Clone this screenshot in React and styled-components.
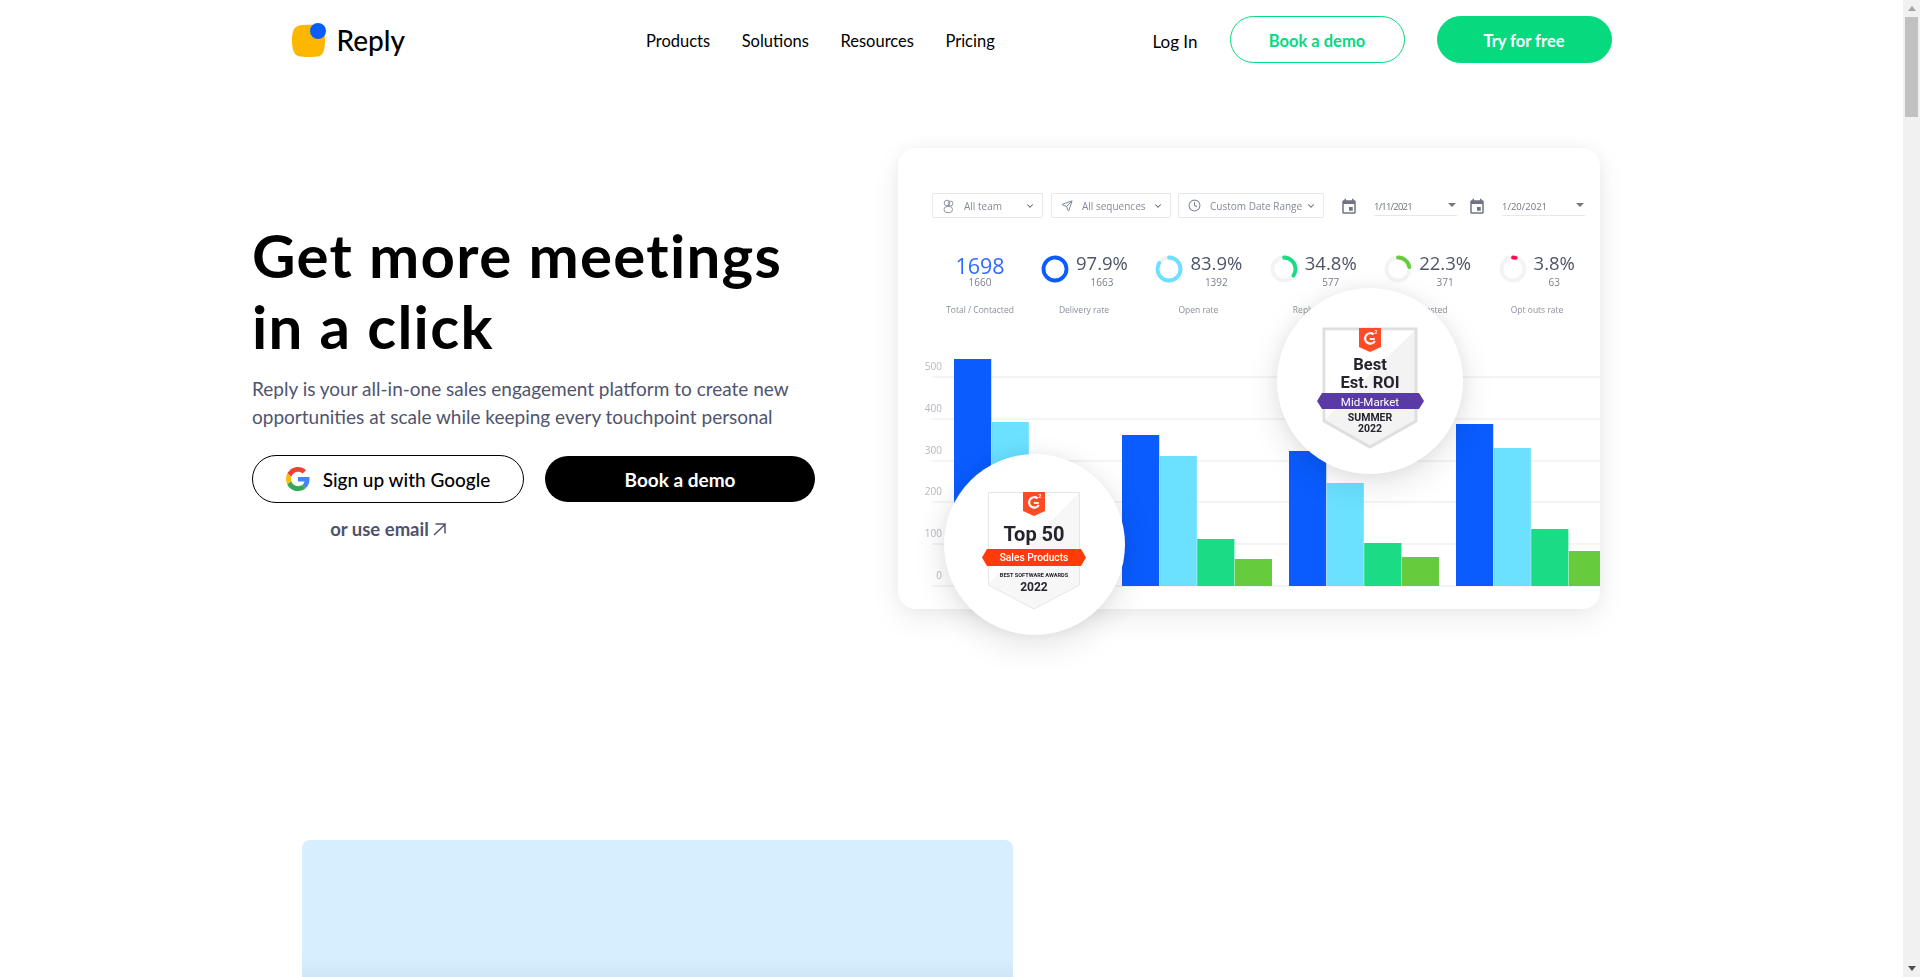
import React from "react"
import styled, { createGlobalStyle } from "styled-components"
import { ChevronDown, Clock, Send } from "lucide-react"
import { MdEvent } from "react-icons/md"

const sans = `"Lato", "Liberation Sans", sans-serif`
const dash = `"Open Sans", "Liberation Sans", sans-serif`
const badge = `"Roboto", "Liberation Sans", sans-serif`

const GlobalStyle = createGlobalStyle`
  html, body {
    margin: 0;
    height: 100%;
    overflow: hidden;
    background: #fff;
    font-family: ${sans};
  }
  * {
    box-sizing: border-box;
  }
`

const Frame = styled.div`
  display: flex;
  height: 100vh;
  overflow: hidden;
  background: #fff;
`

const Main = styled.main`
  flex: 1;
  min-width: 0;
`

const ScrollTrack = styled.div`
  flex: none;
  display: flex;
  flex-direction: column;
  align-items: center;
  width: 17px;
  background: #f1f1f1;
`

const ScrollArrow = styled.div`
  flex: none;
  width: 0;
  height: 0;
  margin: ${(p) => (p.$down ? "auto 0 6px" : "6px 0")};
  border-left: 4.5px solid transparent;
  border-right: 4.5px solid transparent;
  border-bottom: ${(p) => (p.$down ? "0" : "5px solid #a3a3a3")};
  border-top: ${(p) => (p.$down ? "5px solid #505050" : "0")};
`

const ScrollThumb = styled.div`
  flex: none;
  width: 13px;
  height: 100px;
  background: #c1c1c1;
`

const Header = styled.header`
  width: 1320px;
  height: 79px;
  margin: 0 auto;
  padding-top: 16px;
  display: flex;
  align-items: flex-start;
`

const Brand = styled.a`
  display: flex;
  align-items: center;
  gap: 11px;
  height: 47px;
  font-size: 28px;
  font-weight: 500;
  color: #000;
`

const NavLinks = styled.nav`
  display: flex;
  gap: 31.500px;
  height: 47px;
  padding-top: 3px;
  align-items: center;
  margin-left: 241px;
  font-size: 16.500px;
`

const NavLink = styled.a`
  color: #000;
  white-space: nowrap;
`

const NavActions = styled.div`
  display: flex;
  align-items: center;
  margin-left: auto;
  gap: 32px;
  font-size: 17px;
`

const LoginLink = styled(NavLink)`
  padding-top: 3px;
`

const PillButton = styled.a`
  display: flex;
  align-items: center;
  justify-content: center;
  width: 175px;
  height: 47px;
  padding-top: 3px;
  border-radius: 24px;
  font-size: 16.500px;
  font-weight: 700;
  white-space: nowrap;
  color: ${(p) => (p.$solid ? "#fff" : "#06d97e")};
  background: ${(p) => (p.$solid ? "#06d97e" : "#fff")};
  border: 1.5px solid #06d97e;
`

const Hero = styled.section`
  display: flex;
  padding: 69px 0 0 252px;
  height: 761px;
`

const HeroCopy = styled.div`
  width: 646px;
  padding-top: 72px;
`

const Title = styled.h1`
  margin: 0;
  font-size: 60px;
  line-height: 71px;
  letter-spacing: 1.300px;
  font-weight: 700;
  color: #000;
  white-space: nowrap;
`

const Lead = styled.p`
  margin: 13px 0 0;
  font-size: 19px;
  line-height: 28px;
  color: #4f5470;
  white-space: nowrap;
`

const CtaRow = styled.div`
  display: flex;
  align-items: center;
  gap: 21px;
  margin-top: 24px;
`

const GoogleButton = styled.a`
  display: flex;
  align-items: center;
  justify-content: center;
  gap: 13px;
  width: 272px;
  height: 48px;
  border: 1px solid #000;
  border-radius: 24px;
  color: #000;
  font-size: 19px;
  font-weight: 500;
  white-space: nowrap;
`

const BlackButton = styled.a`
  display: flex;
  align-items: center;
  justify-content: center;
  width: 270px;
  height: 46px;
  border-radius: 23px;
  background: #000;
  color: #fff;
  font-size: 19px;
  font-weight: 700;
`

const EmailLink = styled.a`
  display: flex;
  align-items: center;
  justify-content: center;
  gap: 4px;
  width: 272px;
  margin-top: 15px;
  font-size: 18.500px;
  font-weight: 700;
  color: #4d5270;
`

const Card = styled.div`
  position: relative;
  width: 702px;
  height: 461px;
  background: #fff;
  border-radius: 18px;
  box-shadow: 0 10px 30px rgba(0, 0, 0, 0.07), 0 0 20px rgba(0, 0, 0, 0.05);
  font-family: ${dash};
  filter: blur(0.3px);
`

const Toolbar = styled.div`
  display: flex;
  align-items: flex-start;
  padding: 45px 0 0 34px;
  height: 70px;
`

const Select = styled.div`
  display: flex;
  align-items: center;
  width: ${(p) => p.$width}px;
  height: 25px;
  margin-right: ${(p) => p.$gap}px;
  padding: 0 7px 0 9px;
  border: 1px solid #e6e7ea;
  border-radius: 2px;
  font-size: 10px;
  color: #858a99;
  white-space: nowrap;

  svg {
    flex: none;
    color: #858a99;
  }
  span {
    margin-left: 9px;
  }
  svg:last-child {
    margin-left: auto;
    color: #5c6173;
  }
`

const DateIcon = styled(MdEvent)`
  flex: none;
  width: 18px;
  height: 18px;
  margin: 5px 16px 0 0;
  color: #6f7480;
`

const DateField = styled.div`
  position: relative;
  display: flex;
  align-items: center;
  width: 83px;
  height: 23px;
  padding-top: 4px;
  margin-right: ${(p) => p.$gap}px;
  border-bottom: 1px solid #e6e7ea;
  font-size: 9.500px;
  letter-spacing: ${(p) => p.$spacing || 0}px;
  color: #6f7480;

  &::after {
    content: "";
    position: absolute;
    right: 1px;
    top: 10px;
    border: 4px solid transparent;
    border-top: 4px solid #777;
    border-bottom: 0;
  }
`

const Stats = styled.div`
  display: grid;
  grid-template-columns: 143px repeat(5, 114.4px);
  margin-top: 37px;
`

const Stat = styled.div`
  display: flex;
  flex-direction: column;
`

const StatTop = styled.div`
  display: flex;
  gap: 7px;
  height: 33px;
`

const StatNumbers = styled.div`
  text-align: center;
`

const StatValue = styled.div`
  margin-top: -1px;
  font-size: 18.500px;
  line-height: 18px;
  color: #4e5568;
  white-space: nowrap;
`

const TotalValue = styled(StatValue)`
  margin-top: 1px;
  font-size: 21.500px;
  line-height: 20px;
  color: #2f6bff;
`

const StatCount = styled.div`
  margin-top: ${(p) => p.$gap ?? 4}px;
  font-size: 10px;
  line-height: 12px;
  color: #7b8090;
`

const StatLabel = styled.div`
  width: ${(p) => (p.$width ? `${p.$width}px` : "auto")};
  margin-top: 16px;
  font-size: 8.500px;
  line-height: 12px;
  text-align: center;
  color: #8a8f9e;
  white-space: nowrap;
`

const TotalStat = styled(Stat)`
  align-items: center;
  padding-left: 21px;
`

const ChartSvg = styled.svg`
  display: block;
  margin-top: 24px;
`

const AxisLabel = styled.text`
  font-family: ${dash};
  font-size: 10px;
  fill: #b4b7bf;
  text-anchor: end;
`

const BadgeCircle = styled.div`
  position: absolute;
  left: ${(p) => p.$left}px;
  top: ${(p) => p.$top}px;
  width: ${(p) => p.$size}px;
  height: ${(p) => p.$size}px;
  border-radius: 50%;
  background: #fff;
  box-shadow: 0 10px 34px rgba(0, 0, 0, 0.11), 0 0 16px rgba(0, 0, 0, 0.05);

  svg {
    display: block;
  }
`

const BadgeText = styled.text`
  font-family: ${badge};
  font-size: ${(p) => p.$size}px;
  font-weight: ${(p) => p.$weight || 700};
  fill: ${(p) => p.$fill || "#23242d"};
  text-anchor: middle;
`

const BluePanel = styled.div`
  width: 711px;
  height: 500px;
  margin-left: 302px;
  border-radius: 8px 8px 0 0;
  background: linear-gradient(#d7eeff 118px, #cfe7f7 135px);
`

const Logo = () => (
  <svg width="34" height="34" viewBox="0 0 34 34">
    <path
      d="M11 2C17 1.500 24 1.500 28 3C32 5 33 10 33 17C33 25 32 31 28 32.800C23 34.500 11 34.500 6 33C2 31.500 0 26 0 18C0 11 1 6 4 4C6 2.700 8 2.200 11 2z"
      fill="#fdb700"
    />
    <circle cx="26" cy="8" r="8" fill="#0a5cff" />
  </svg>
)

const GoogleIcon = () => (
  <svg width="24" height="24" viewBox="0 0 48 48">
    <path fill="#EA4335" d="M24 9.500c3.540 0 6.710 1.220 9.210 3.600l6.850-6.850C35.900 2.380 30.470 0 24 0 14.620 0 6.510 5.380 2.560 13.220l7.980 6.190C12.430 13.720 17.740 9.500 24 9.500z" />
    <path fill="#4285F4" d="M46.980 24.550c0-1.570-.15-3.090-.38-4.550H24v9.020h12.940c-.58 2.960-2.260 5.480-4.780 7.180l7.730 6c4.510-4.180 7.090-10.360 7.090-17.650z" />
    <path fill="#FBBC05" d="M10.530 28.590c-.48-1.450-.76-2.990-.76-4.590s.27-3.140.76-4.590l-7.980-6.190C.92 16.460 0 20.120 0 24c0 3.880.92 7.540 2.560 10.780l7.970-6.190z" />
    <path fill="#34A853" d="M24 48c6.480 0 11.930-2.130 15.890-5.810l-7.730-6c-2.150 1.450-4.920 2.300-8.160 2.300-6.260 0-11.570-4.220-13.470-9.910l-7.980 6.190C6.510 42.620 14.620 48 24 48z" />
  </svg>
)

const EmailArrow = () => (
  <svg width="13" height="13" viewBox="0 0 13 13" fill="none" stroke="currentColor" strokeWidth="1.500">
    <path d="M1 12 12 1.500M2.500 1H12V10.500" />
  </svg>
)

const TeamIcon = () => (
  <svg width="13" height="14" viewBox="0 0 13 14" fill="none" stroke="currentColor" strokeWidth="0.9">
    <circle cx="5" cy="4" r="2.800" />
    <circle cx="8.500" cy="4.500" r="2.400" />
    <rect x="2" y="7.500" width="8.500" height="6" rx="3" />
  </svg>
)

const G2Tag = ({ x, y }) => (
  <g transform={`translate(${x} ${y})`}>
    <path d="M0 0h22v19L11 24 0 19z" fill="#ff4b25" />
    <path d="M14.600 6.400A5.200 5.200 0 1 0 15.800 13" fill="none" stroke="#fff" strokeWidth="2.200" />
    <path d="M10.800 11h5" fill="none" stroke="#fff" strokeWidth="1.800" />
    <text x="16.800" y="6" fontFamily={badge} fontSize="5.500" fontWeight="700" fill="#fff" textAnchor="middle">2</text>
  </g>
)

const Ribbon = ({ x, y, width, height, fill }) => (
  <path
    d={`M${x + 5} ${y}h${width - 10}l5 ${height / 2}l-5 ${height / 2}h${-(width - 10)}l-5 ${-height / 2}z`}
    fill={fill}
  />
)

const Ring = ({ value, color }) => (
  <svg width="28" height="28" viewBox="0 0 28 28" style={{ flex: "none" }}>
    <circle cx="14" cy="14" r="11.500" fill="none" stroke="#f3f3f4" strokeWidth="3.800" />
    <circle
      cx="14"
      cy="14"
      r="11.500"
      fill="none"
      stroke={color}
      strokeWidth="3.800"
      strokeLinecap="round"
      pathLength="100"
      strokeDasharray={`${value} 100`}
      transform="rotate(-90 14 14)"
    />
  </svg>
)

const stats = [
  { value: 97.9, count: 1663, label: "Delivery rate", color: "#0a5cff", labelWidth: 86 },
  { value: 83.9, count: 1392, label: "Open rate", color: "#6be0ff", labelWidth: 86 },
  { value: 34.8, count: 577, label: "Reply rate", color: "#1bdc85", labelWidth: 86 },
  { value: 22.3, count: 371, label: "Interested", color: "#66cc3e", labelWidth: 86 },
  { value: 3.8, count: 63, label: "Opt outs rate", color: "#ff0a50", labelWidth: 77 },
]

const barColors = ["#0a5cff", "#6be0ff", "#1bdc85", "#66cc3e"]

// x of each group's first bar and the top of its four bars, in chart coordinates
const barGroups = [
  { x: 56, tops: [19, 82, 200, 220] },
  { x: 224, tops: [95, 116, 199, 219] },
  { x: 391, tops: [111, 143, 203, 217] },
  { x: 558, tops: [84, 108, 189, 211] },
]

const Chart = () => (
  <ChartSvg width="702" height="269" viewBox="0 0 702 269">
    {[37, 79, 121, 162, 204, 246].map((y) => (
      <line key={y} x1="34" x2="702" y1={y} y2={y} stroke="#e9eaed" strokeWidth="1.200" />
    ))}
    {[500, 400, 300, 200, 100, 0].map((n, i) => (
      <AxisLabel key={n} x="44" y={30 + i * 41.8}>
        {n}
      </AxisLabel>
    ))}
    {barGroups.map((group) =>
      group.tops.map((top, i) => (
        <rect
          key={i}
          x={group.x + i * 37.6}
          y={top}
          width={Math.min(37.2, 702 - group.x - i * 37.6)}
          height={246 - top}
          fill={barColors[i]}
        />
      ))
    )}
  </ChartSvg>
)

const BestBadge = () => (
  <BadgeCircle $left={379} $top={140} $size={186}>
    <svg width="186" height="186" viewBox="0 0 186 186">
      <path d="M47 41h92v92l-46 26-46-26z" fill="#f3f3f3" stroke="#dedfe1" strokeWidth="3" />
      <path d="M48.500 42.500H137.500L48.500 131z" fill="#fff" />
      <G2Tag x={82} y={40} />
      <BadgeText x="93" y="82" $size="16.500">Best</BadgeText>
      <BadgeText x="93" y="100" $size="16.500">Est. ROI</BadgeText>
      <Ribbon x={40} y={105} width={107} height={16} fill="#5a3aa5" />
      <BadgeText x="93" y="117.500" $size="11.500" $weight="400" $fill="#fff">Mid-Market</BadgeText>
      <BadgeText x="93" y="133" $size="10.500">SUMMER</BadgeText>
      <BadgeText x="93" y="144" $size="10.500">2022</BadgeText>
    </svg>
  </BadgeCircle>
)

const TopBadge = () => (
  <BadgeCircle $left={46} $top={306} $size={181}>
    <svg width="181" height="181" viewBox="0 0 181 181">
      <path d="M44.500 38.500h91v92.500l-45.500 24-45.500-24z" fill="#f7f7f7" stroke="#e6e6e6" />
      <path d="M45 39H135L45 129z" fill="#fff" />
      <G2Tag x={79} y={38} />
      <BadgeText x="90" y="87" $size="20">Top 50</BadgeText>
      <Ribbon x={38} y={95} width={104} height={17} fill="#ff3b0a" />
      <BadgeText x="90" y="107" $size="10.200" $weight="500" $fill="#fff">Sales Products</BadgeText>
      <BadgeText x="90" y="122.500" $size="5.600">BEST SOFTWARE AWARDS</BadgeText>
      <BadgeText x="90" y="137" $size="12">2022</BadgeText>
    </svg>
  </BadgeCircle>
)

const Dashboard = () => (
  <Card>
    <Toolbar>
      <Select $width={111} $gap={8}>
        <TeamIcon />
        <span>All team</span>
        <ChevronDown size={10} strokeWidth={2.5} />
      </Select>
      <Select $width={120} $gap={7}>
        <Send size={12} />
        <span>All sequences</span>
        <ChevronDown size={10} strokeWidth={2.5} />
      </Select>
      <Select $width={146} $gap={16}>
        <Clock size={13} />
        <span>Custom Date Range</span>
        <ChevronDown size={10} strokeWidth={2.5} />
      </Select>
      <DateIcon />
      <DateField $gap={11} $spacing={-0.8}>1/11/2021</DateField>
      <DateIcon />
      <DateField $gap={0}>1/20/2021</DateField>
    </Toolbar>
    <Stats>
      <TotalStat>
        <StatNumbers>
          <TotalValue>1698</TotalValue>
          <StatCount $gap={0}>1660</StatCount>
        </StatNumbers>
        <StatLabel>Total / Contacted</StatLabel>
      </TotalStat>
      {stats.map((s) => (
        <Stat key={s.label}>
          <StatTop>
            <Ring value={s.value} color={s.color} />
            <StatNumbers>
              <StatValue>{s.value}%</StatValue>
              <StatCount>{s.count}</StatCount>
            </StatNumbers>
          </StatTop>
          <StatLabel $width={s.labelWidth}>{s.label}</StatLabel>
        </Stat>
      ))}
    </Stats>
    <Chart />
    <BestBadge />
    <TopBadge />
  </Card>
)

const App = () => (
  <Frame>
    <GlobalStyle />
    <Main>
      <Header>
        <Brand>
          <Logo />
          Reply
        </Brand>
        <NavLinks>
          <NavLink>Products</NavLink>
          <NavLink>Solutions</NavLink>
          <NavLink>Resources</NavLink>
          <NavLink>Pricing</NavLink>
        </NavLinks>
        <NavActions>
          <LoginLink>Log In</LoginLink>
          <PillButton>Book a demo</PillButton>
          <PillButton $solid>Try for free</PillButton>
        </NavActions>
      </Header>
      <Hero>
        <HeroCopy>
          <Title>
            Get more meetings
            <br />
            in a click
          </Title>
          <Lead>
            Reply is your all-in-one sales engagement platform to create new
            <br />
            opportunities at scale while keeping every touchpoint personal
          </Lead>
          <CtaRow>
            <GoogleButton>
              <GoogleIcon />
              Sign up with Google
            </GoogleButton>
            <BlackButton>Book a demo</BlackButton>
          </CtaRow>
          <EmailLink>
            or use email
            <EmailArrow />
          </EmailLink>
        </HeroCopy>
        <Dashboard />
      </Hero>
      <BluePanel />
    </Main>
    <ScrollTrack>
      <ScrollArrow />
      <ScrollThumb />
      <ScrollArrow $down />
    </ScrollTrack>
  </Frame>
)

export default App
